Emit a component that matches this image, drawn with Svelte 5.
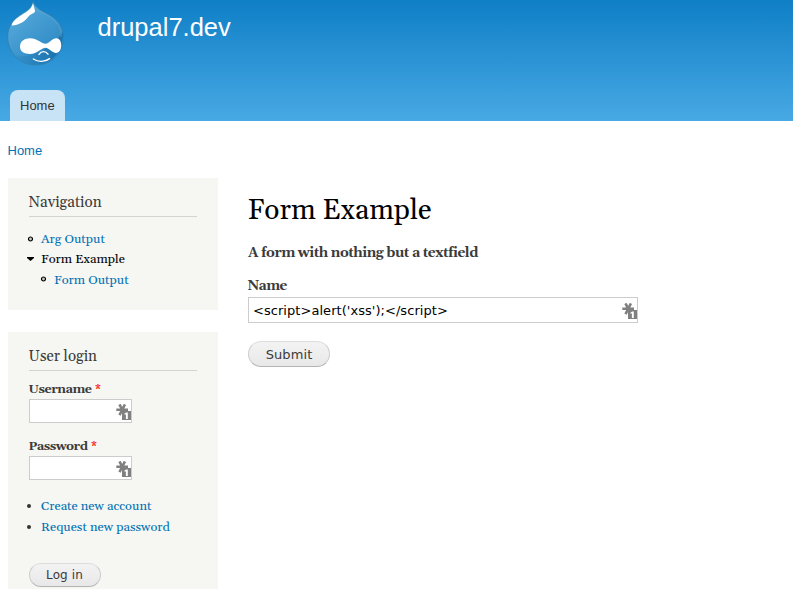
<script>
  const account = ['Create new account', 'Request new password'];
  const fields = [
    { id: 'user', label: 'Username', type: 'text' },
    { id: 'pass', label: 'Password', type: 'password' }
  ];
</script>

{#snippet keyIcon()}
  <svg class="key" width="16" height="16" viewBox="0 0 16 16" aria-hidden="true">
    <path d="M.3 5.8H12M3.5 .4L8.9 11.2M8.9 .4L3.5 11.2" fill="none" stroke="#808080" stroke-width="2.6" />
    <rect x="6" y="7" width="9" height="9" fill="#808080" />
    <path d="M8.4 9.8L10.2 8.4H11.8V15H9.9V10.6H8.4Z" fill="#fff" />
  </svg>
{/snippet}

<div class="page">
  <header>
    <div class="brand">
      <svg class="logo" width="58" height="65" viewBox="0 0 58 65" aria-label="Home">
        <defs>
          <linearGradient id="drop" x1="0" y1="0" x2="0.8" y2="1">
            <stop offset="0" stop-color="#62b2df" />
            <stop offset="0.5" stop-color="#429ad0" />
            <stop offset="1" stop-color="#2b87c1" />
          </linearGradient>
          <linearGradient id="shade" x1="0" y1="0" x2="1" y2="0">
            <stop offset="0" stop-color="#1a73ae" stop-opacity="0.15" />
            <stop offset="1" stop-color="#1268a4" stop-opacity="0.75" />
          </linearGradient>
        </defs>
        <path d="M26 0C27.5 6 34 9.5 41 13C49 17.5 56.5 24 56.5 36C56.5 53 44 64 29 64C12 64 .7 51 .7 36C.7 24 8 17 15 12.5C21 9 25 6.5 26 0Z" fill="url(#drop)" stroke="#2f7faf" stroke-width=".8" />
        <path d="M56 31C56 53 43 63.5 29 63.5C20 63.5 12 59 8 54C24 58 43 49 56 31Z" fill="url(#shade)" />
        <path d="M26 2C24.5 8.5 20 10.5 15 13.8C8.5 17.8 4.8 21.5 4.8 24.6C12 24.2 18 20.5 21.5 15.5C24 12.5 27 12.5 28 10.5C28 8 26.5 5 26 2Z" fill="#fff" />
        <path d="M27 6C30 11 39 12 46 18C52 23 55 30 54 36" fill="none" stroke="#65afd9" stroke-width=".8" opacity=".6" />
        <path d="M13 45.8C13 40 17.5 37.2 23 37.2C30 37.2 34.8 42.8 38.5 42.8C42 42.8 45 37.2 49.5 37.2C53 37.2 54.3 41 54.2 44.6C54 49.5 51.5 52.3 48.6 52C44.5 51.3 41.5 46.8 38.5 46.8C34.5 46.8 30 53 23 53C17.5 53 13 51 13 45.8Z" fill="#fff" />
        <path d="M32 53.4C34.5 49.8 38.5 49.8 41 53.2M26.4 58C31 61.4 38.5 61 42.6 57.6" fill="none" stroke="#fff" stroke-width="1.4" stroke-linecap="round" />
      </svg>
      <div class="site">drupal7.dev</div>
    </div>
    <nav><a class="tab" href="#home">Home</a></nav>
  </header>

  <div class="crumb"><a href="#home">Home</a></div>

  <div class="columns">
    <aside>
      <section class="block navigation">
        <h2>Navigation</h2>
        <ul class="menu">
          <li>
            <svg width="7" height="7" viewBox="0 0 7 7"><circle cx="3.5" cy="3" r="2" fill="#ccc" stroke="#000" stroke-width="1.2" /></svg>
            <a href="#arg">Arg Output</a>
          </li>
          <li class="open">
            <svg width="7" height="7" viewBox="0 0 7 7"><path d="M0 1H7V2L3.5 5L0 2Z" fill="#000" /></svg>
            <a class="active" href="#form">Form Example</a>
          </li>
          <li class="child">
            <svg width="7" height="7" viewBox="0 0 7 7"><circle cx="3.5" cy="3" r="2" fill="#ccc" stroke="#000" stroke-width="1.2" /></svg>
            <a href="#output">Form Output</a>
          </li>
        </ul>
      </section>

      <section class="block login">
        <h2>User login</h2>
        {#each fields as f}
          <div class="item">
            <label for={f.id}>{f.label} <span>*</span></label>
            <div class="field"><input id={f.id} type={f.type} />{@render keyIcon()}</div>
          </div>
        {/each}
        <ul class="links">
          {#each account as a}
            <li><i></i><a href="#account">{a}</a></li>
          {/each}
        </ul>
        <button class="small">Log in</button>
      </section>
    </aside>

    <main>
      <h1>Form Example</h1>
      <p>A form with nothing but a textfield</p>
      <label for="name">Name</label>
      <div class="field wide">
        <input id="name" type="text" value="&lt;script&gt;alert('xss');&lt;/script&gt;" />{@render keyIcon()}
      </div>
      <button>Submit</button>
    </main>
  </div>
</div>

<style>
  .page {
    width: 793px;
    height: 589px;
    overflow: hidden;
    background: #fff;
    color: #3b3b3b;
    font-family: Gelasio, "Liberation Serif", serif;
  }
  .page * { box-sizing: border-box; }
  a { color: #0071b3; text-decoration: none; }
  ul { list-style: none; margin: 0; padding: 0; }
  h1, h2, p { margin: 0; font-weight: normal; }
  header {
    height: 121px;
    display: flex;
    flex-direction: column;
    justify-content: space-between;
    background: linear-gradient(#0f7fc6, #48a9e4);
  }
  .brand { display: flex; padding: 1px 0 0 7px; }
  .logo { display: block; }
  .site {
    margin: 10px 0 0 32.5px;
    color: #fffeff;
    font: 25.5px/32px "Liberation Sans", sans-serif;
  }
  nav { display: flex; padding-left: 10px; }
  .tab {
    height: 31px;
    padding: 0 10px;
    border-radius: 8px 8px 0 0;
    background: #c7e3f5;
    color: #333;
    font: 13px/31px "Liberation Sans", sans-serif;
  }
  .crumb {
    height: 57px;
    padding: 20px 0 0 7.5px;
    font: 13px/19px "Liberation Sans", sans-serif;
  }
  .columns { display: flex; align-items: flex-start; }
  aside { width: 210px; margin-left: 8px; }
  .block { background: #f6f6f2; padding: 14px 21px 0 20.5px; }
  .navigation { height: 132px; }
  .login { height: 270px; margin-top: 22px; }
  h2 {
    height: 25px;
    border-bottom: 1px solid #d3d3d0;
    font-size: 15.1px;
    line-height: 21px;
  }
  .menu { padding-top: 12px; }
  .menu li, .links li {
    display: flex;
    align-items: center;
    height: 20.5px;
    font-size: 12.8px;
    line-height: 20px;
  }
  .menu svg { margin: 0 7px 0 -1.5px; }
  .menu .open { height: 19.5px; }
  .menu .child { height: 21.5px; padding-left: 13px; }
  .active { color: #000; }
  .item { height: 57px; padding-top: 9px; }
  label {
    display: block;
    height: 19px;
    font-size: 12.6px;
    line-height: 18px;
    font-weight: bold;
    letter-spacing: -0.5px;
    word-spacing: 0.8px;
  }
  label span { color: #f00; font-weight: normal; }
  .field { position: relative; width: 103px; height: 24px; }
  .field input {
    display: block;
    width: 100%;
    height: 100%;
    margin: 0;
    padding: 0 4px;
    border: 1px solid #ccc;
    border-radius: 0;
    background: #fff;
    color: #000;
    font: 13px "DejaVu Sans", sans-serif;
    letter-spacing: 0.05px;
    outline: none;
  }
  .key { position: absolute; right: 0; top: 5px; }
  .links { padding-top: 11px; }
  .links i {
    width: 4px;
    height: 4px;
    margin: 0 10.5px 0 -2px;
    border-radius: 50%;
    background: #333;
  }
  button {
    display: block;
    width: 82px;
    height: 26px;
    margin: 18px 0 0;
    padding: 0;
    border: 1px solid #ccc;
    border-top-color: #ddd;
    border-bottom-color: #b4b4b4;
    border-radius: 13px;
    background: linear-gradient(#f3f3f3, #e8e8e8);
    color: #3a3a3a;
    font: 13px/23px "DejaVu Sans", sans-serif;
    letter-spacing: 0.1px;
  }
  .small { width: 72px; height: 24px; margin-top: 26px; font-size: 12px; line-height: 22px; }
  main { padding: 13px 0 0 30px; }
  h1 { height: 38px; margin-left: -0.5px; color: #000; font-size: 28.1px; line-height: 41px; }
  main p { margin-top: 13px; font-size: 13.9px; line-height: 23px; height: 21px; font-weight: bold; letter-spacing: -0.48px; }
  main label { margin: 13px 0 0 -0.5px; height: 21px; font-size: 13.7px; line-height: 20px; }
  .wide { width: 390px; height: 26px; }
  .wide .key { top: 6px; }
</style>
